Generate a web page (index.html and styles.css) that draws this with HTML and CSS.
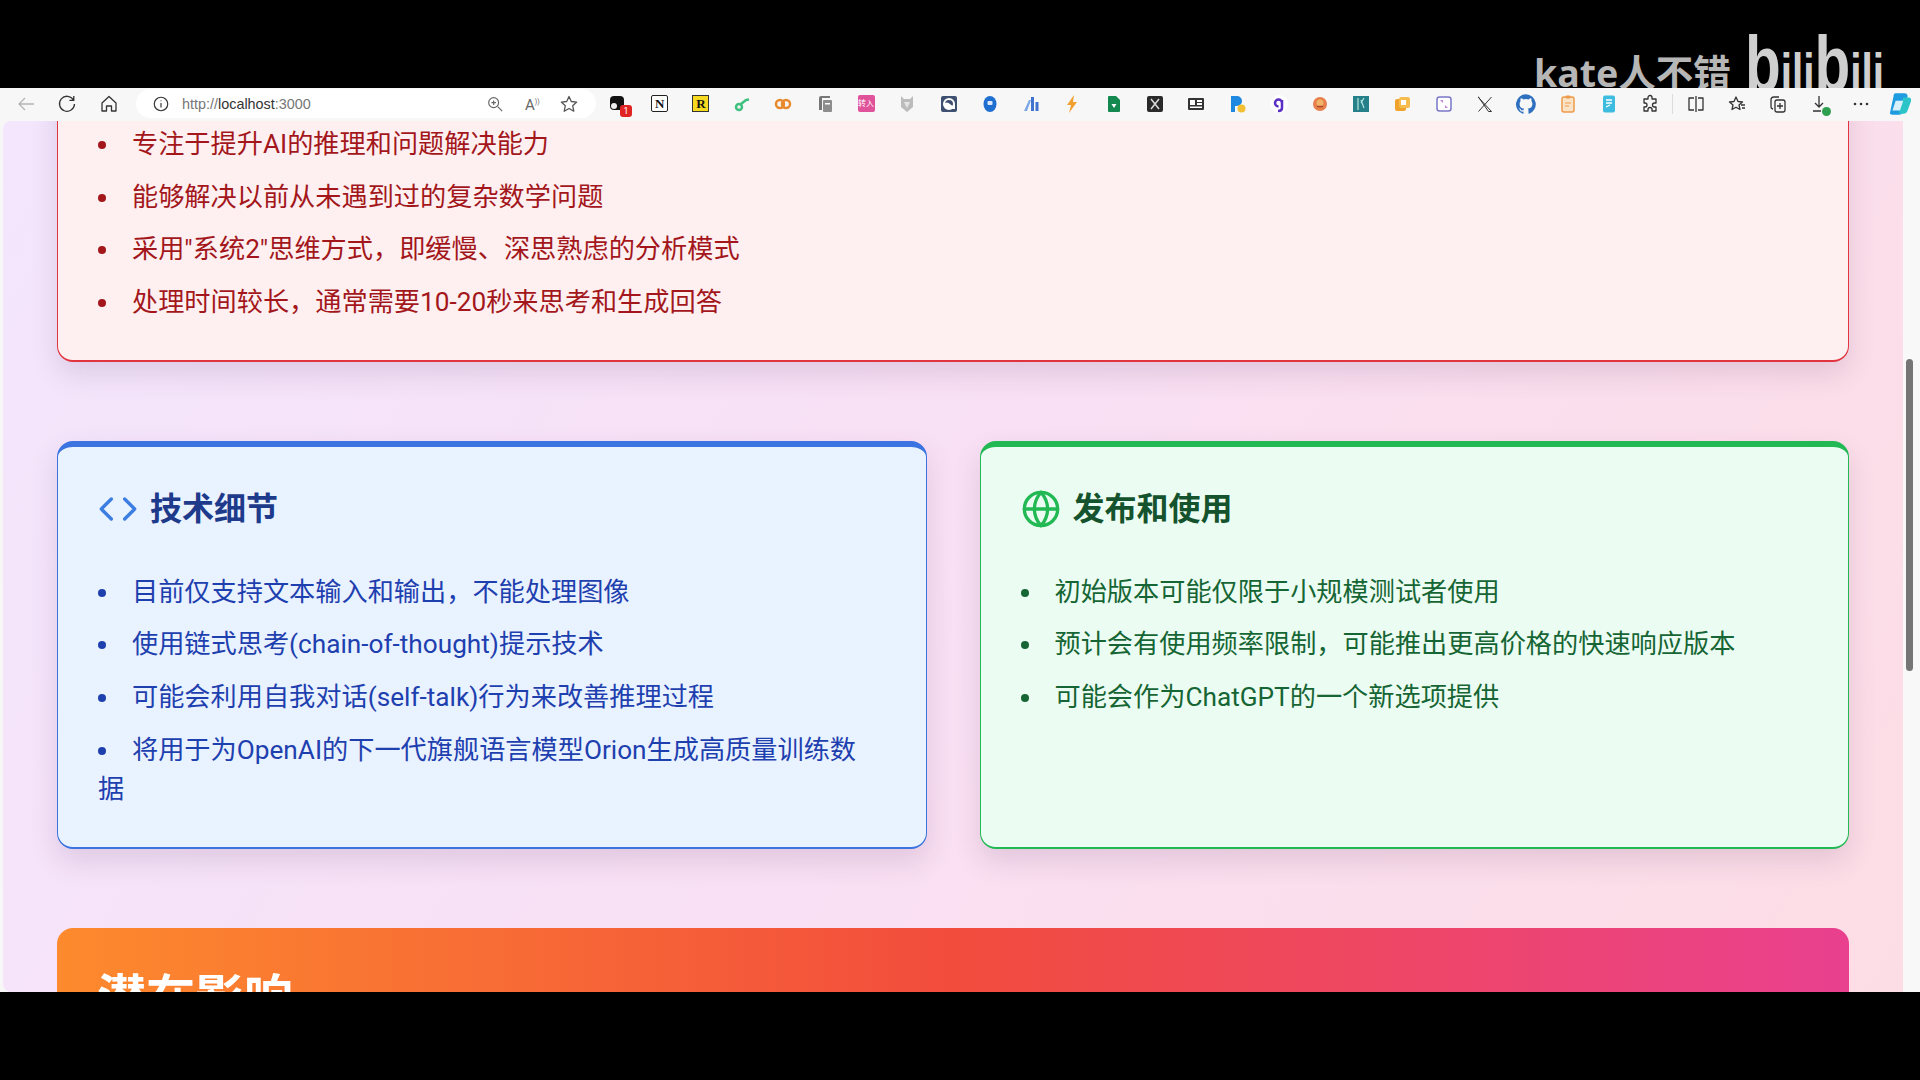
FILE: index.html
```html
<!DOCTYPE html>
<html lang="zh-CN">
  <head>
    <meta charset="UTF-8" />
    <title>localhost:3000</title>
    <link rel="stylesheet" href="styles.css">
  </head>
  <body>
    <!-- Video frame top with watermark -->
    <div class="letterbox">
      <div class="watermark">
        <span class="wm-name">kate人不错</span>
        <span class="wm-logo">b<small>ili</small>b<small>ili</small></span>
      </div>
    </div>

    <!-- Browser toolbar -->
    <div class="toolbar">
      <div class="nav-btn"><svg viewBox="0 0 20 20" class="line faint"><path d="M18 10H3M9 4l-6 6 6 6"/></svg></div>
      <div class="nav-btn"><svg viewBox="0 0 20 20" class="line"><path d="M16.5 6A7.5 7.5 0 1 0 17.5 10M16.8 2v4.4h-4.4"/></svg></div>
      <div class="nav-btn"><svg viewBox="0 0 20 20" class="line"><path d="M3 9l7-6.500L17 9v8h-4.500v-5h-5v5H3z"/></svg></div>

      <div class="address">
        <svg viewBox="0 0 20 20" class="line addr-info"><circle cx="10" cy="10" r="7.500"/><path d="M10 9v5M10 6v1"/></svg>
        <span class="url"><span class="url-dim">http://</span>localhost<span class="url-dim">:3000</span></span>
        <svg viewBox="0 0 20 20" class="line addr-zoom"><circle cx="8.500" cy="8.500" r="5.500"/><path d="M13 13l5 5M8.500 6v5M6 8.500h5"/></svg>
        <span class="addr-read">A<sup>))</sup></span>
        <svg viewBox="0 0 20 20" class="line addr-star"><path d="M10 2.500l2.300 5 5.400.600-4 3.700 1.100 5.400L10 14.500l-4.800 2.700 1.100-5.400-4-3.700 5.400-.600z"/></svg>
      </div>

      <div class="extensions">
        <div class="ext"><svg viewBox="0 0 20 20"><rect x="2" y="2" width="14" height="14" rx="4" fill="#111"/><circle cx="6" cy="12" r="3" fill="#eee"/></svg><span class="badge">1</span></div>
        <div class="ext"><span class="ext-n">N</span></div>
        <div class="ext"><span class="ext-r">R</span></div>
        <div class="ext"><svg viewBox="0 0 20 20" class="line" style="stroke:#3fc07e;stroke-width:2.500"><circle cx="7" cy="13" r="3"/><path d="M9 10l5-4 3-.500"/></svg></div>
        <div class="ext"><svg viewBox="0 0 20 20" class="line" style="stroke:#e8892b;stroke-width:2.500"><circle cx="7" cy="10" r="4"/><circle cx="13" cy="10" r="4"/></svg></div>
        <div class="ext"><svg viewBox="0 0 20 20"><path d="M6 2h9v2H7v12H4V4q0-2 2-2z" fill="#777"/><rect x="8" y="6" width="9" height="12" rx="1" fill="#8d8d8d"/><rect x="10" y="9" width="5" height="1.500" fill="#fff"/></svg></div>
        <div class="ext"><span class="ext-zh">转入</span></div>
        <div class="ext"><svg viewBox="0 0 20 20"><path d="M4 2l3 3h6l3-3v11l-6 5-6-5z" fill="#bcbcbc"/><path d="M7 8h6l-3 6z" fill="#e6e6e6"/></svg></div>
        <div class="ext"><svg viewBox="0 0 20 20"><rect x="2" y="2" width="16" height="16" rx="2" fill="#3d5070"/><circle cx="10" cy="10" r="5" fill="none" stroke="#fff" stroke-width="2"/><path d="M4 10q4-3 7 0t5 0v5H7z" fill="#fff"/></svg></div>
        <div class="ext"><svg viewBox="0 0 20 20"><ellipse cx="10" cy="10" rx="6.500" ry="8" fill="#1f6fd0"/><rect x="7.500" y="7" width="5" height="4" rx="1" fill="#dbe9fb"/></svg></div>
        <div class="ext"><svg viewBox="0 0 20 20"><path d="M3 17L8 6h2L6 17z" fill="#7aa6e8"/><rect x="10" y="3" width="3" height="14" fill="#3f73cf"/><rect x="14.500" y="8" width="3" height="9" fill="#3f73cf"/></svg></div>
        <div class="ext"><svg viewBox="0 0 20 20"><path d="M12 1L5 11h4l-2 8 8-11h-4z" fill="#f0a030"/></svg></div>
        <div class="ext"><svg viewBox="0 0 20 20"><path d="M4 3q0-1 1-1h7l4 4v11q0 1-1 1H5q-1 0-1-1z" fill="#13894f"/><path d="M7.500 10h5L10 14z" fill="#fff"/></svg></div>
        <div class="ext"><svg viewBox="0 0 20 20"><rect x="2" y="2" width="16" height="16" rx="2" fill="#2a2a2a"/><path d="M6 5l8 10M14 5L6 15" stroke="#ddd" stroke-width="1.500"/></svg></div>
        <div class="ext"><svg viewBox="0 0 20 20"><rect x="2" y="4" width="16" height="12" rx="1" fill="#333"/><rect x="4" y="6" width="5" height="5" fill="#fff"/><rect x="11" y="6" width="5" height="2" fill="#fff"/><rect x="11" y="9" width="5" height="2" fill="#fff"/><rect x="4" y="12.500" width="12" height="1.500" fill="#fff"/></svg></div>
        <div class="ext"><svg viewBox="0 0 20 20"><path d="M4 2h6a5 5 0 0 1 0 10H8v6H4z" fill="#1f88e0"/><circle cx="14.500" cy="14.500" r="4" fill="#f3c033"/></svg></div>
        <div class="ext"><svg viewBox="0 0 20 20"><circle cx="10" cy="10" r="9" fill="#fff"/><path d="M13 6v8q0 3-4 3M13 9a3.500 3.500 0 1 0-3.500 3.500" fill="none" stroke="#5b2ec4" stroke-width="2.500"/></svg></div>
        <div class="ext"><svg viewBox="0 0 20 20"><circle cx="10" cy="10" r="7" fill="#e77f4a"/><circle cx="10" cy="9" r="3.500" fill="#f2b36a"/><path d="M7 12.500h6" stroke="#a84a22" stroke-width="1.500"/></svg></div>
        <div class="ext"><svg viewBox="0 0 20 20"><rect x="2" y="2" width="16" height="16" fill="#25808a"/><path d="M7 4v12M10 6l3 8M13 4l-3 5" stroke="#b7e4e0" stroke-width="1.200"/></svg></div>
        <div class="ext"><svg viewBox="0 0 20 20"><rect x="3" y="5" width="11" height="12" rx="2" fill="#f0a32c"/><rect x="7" y="3" width="11" height="11" rx="2" fill="#f6bd4e"/><rect x="9" y="6" width="5" height="5" fill="#fff"/></svg></div>
        <div class="ext"><svg viewBox="0 0 20 20"><rect x="3" y="3" width="14" height="14" rx="2.500" fill="#fff" stroke="#7b78c8" stroke-width="1.500"/><path d="M6 6h3v3zM14 14h-3v-3z" fill="#c084d8"/></svg></div>
        <div class="ext"><svg viewBox="0 0 20 20" class="line thin"><path d="M3 3l13.500 14.500h-3L3.500 3zM16.500 3L3.500 17.500"/></svg></div>
        <div class="ext"><svg viewBox="0 0 16 16"><path fill="#2f6fc0" d="M8 .2a8 8 0 0 0-2.500 15.600c.4.100.5-.2.500-.4v-1.400c-2.200.5-2.700-1-2.700-1-.4-.9-.9-1.200-.9-1.200-.7-.5.100-.5.100-.5.800.100 1.200.8 1.200.8.700 1.200 1.900.9 2.300.7.100-.5.300-.9.500-1.100-1.800-.2-3.600-.9-3.600-4 0-.9.300-1.600.8-2.100-.1-.2-.4-1 .1-2.100 0 0 .7-.2 2.200.8a7.500 7.500 0 0 1 4 0c1.500-1 2.200-.8 2.200-.8.400 1.100.200 1.900.1 2.100.5.600.8 1.300.8 2.100 0 3.100-1.900 3.700-3.700 3.900.3.300.6.800.6 1.500v2.200c0 .2.100.500.600.4A8 8 0 0 0 8 .2z"/></svg></div>
        <div class="ext"><svg viewBox="0 0 20 20"><rect x="4" y="3" width="12" height="15" rx="2" fill="#fbe3c8" stroke="#ee9a4a" stroke-width="1.500"/><rect x="7.500" y="1.500" width="5" height="3" rx="1" fill="#ee9a4a"/><path d="M7 9h6M7 12h4" stroke="#ee9a4a"/></svg></div>
        <div class="ext"><svg viewBox="0 0 20 20"><rect x="4" y="1.500" width="12" height="17" rx="2" fill="#3dbce0"/><path d="M7 6h6M7 9h6M7 13l4-2" stroke="#fff" stroke-width="1.300"/></svg></div>
        <div class="ext"><svg viewBox="0 0 20 20" class="line"><path d="M8 3.500a2 2 0 0 1 4 0V5h4v4h-1.500a2 2 0 0 0 0 4H16v4h-4v-1.500a2 2 0 0 0-4 0V17H4v-4h1a2 2 0 0 0 0-4H4V5h4z"/></svg></div>
        <div class="divider"></div>
        <div class="ext"><svg viewBox="0 0 20 20" class="line"><path d="M8 4H3v12h5M12 4h5v12h-5M10 2v16"/></svg></div>
        <div class="ext"><svg viewBox="0 0 20 20" class="line"><path d="M9 3l2 4.500 4.500.500-3.500 3 1 4.500-4-2.300-4 2.300 1-4.500-3.500-3 4.500-.500zM14 11h4M15 14h3"/></svg></div>
        <div class="ext"><svg viewBox="0 0 20 20" class="line"><rect x="7" y="6" width="10" height="12" rx="2"/><path d="M5 15q-2-.500-2-2V6q0-3 3-3h5M12 9v6M9 12h6"/></svg></div>
        <div class="ext"><svg viewBox="0 0 20 20" class="line"><path d="M9 2v11M5 9l4 4 4-4M3 17h8"/></svg><span class="dl-ok"></span></div>
        <div class="ext"><svg viewBox="0 0 20 20"><circle cx="4" cy="10" r="1.300" fill="#333"/><circle cx="10" cy="10" r="1.300" fill="#333"/><circle cx="16" cy="10" r="1.300" fill="#333"/></svg></div>
        <div class="ext ext-last"><svg viewBox="0 0 24 24" class="copilot"><path d="M8 2h8q3 0 3 3l-4 14q-1 3-4 3H5q-3 0-2-3L6 5q0-3 2-3z" fill="#1f9be0"/><path d="M15 6h5q3 0 2 4l-3 8q-1 3-4 3h-4z" fill="#2bc4c8"/><path d="M8 9h7l-3 9H5z" fill="#d8f0fa"/></svg></div>
      </div>
    </div>

    <!-- Page viewport, scrolled part way down -->
    <div class="viewport">
      <div class="edge"></div>
      <main class="page">
        <section class="card card-red card-scrolled">
          <ul>
            <li>专注于提升AI的推理和问题解决能力</li>
            <li>能够解决以前从未遇到过的复杂数学问题</li>
            <li>采用"系统2"思维方式，即缓慢、深思熟虑的分析模式</li>
            <li>处理时间较长，通常需要10-20秒来思考和生成回答</li>
          </ul>
        </section>

        <div class="two-col">
          <section class="card card-blue">
            <h2>
              <svg viewBox="0 0 24 24" class="title-icon"><polyline points="16 18 22 12 16 6"/><polyline points="8 6 2 12 8 18"/></svg>
              技术细节
            </h2>
            <ul>
              <li>目前仅支持文本输入和输出，不能处理图像</li>
              <li>使用链式思考(chain-of-thought)提示技术</li>
              <li>可能会利用自我对话(self-talk)行为来改善推理过程</li>
              <li>将用于为OpenAI的下一代旗舰语言模型Orion生成高质量训练数据</li>
            </ul>
          </section>

          <section class="card card-green">
            <h2>
              <svg viewBox="0 0 24 24" class="title-icon"><circle cx="12" cy="12" r="10"/><line x1="2" y1="12" x2="22" y2="12"/><path d="M12 2a15.300 15.300 0 0 1 4 10 15.300 15.300 0 0 1-4 10 15.300 15.300 0 0 1-4-10 15.300 15.300 0 0 1 4-10z"/></svg>
              发布和使用
            </h2>
            <ul>
              <li>初始版本可能仅限于小规模测试者使用</li>
              <li>预计会有使用频率限制，可能推出更高价格的快速响应版本</li>
              <li>可能会作为ChatGPT的一个新选项提供</li>
            </ul>
          </section>
        </div>

        <section class="impact">
          <h2>潜在影响</h2>
        </section>
      </main>
      <div class="scrollbar"><div class="thumb"></div></div>
    </div>

    <div class="letterbox-bottom"></div>
  </body>
</html>
```

FILE: styles.css
```css
* {
  box-sizing: border-box;
}
html,
body {
  margin: 0;
  height: 1080px;
  overflow: hidden;
  background: #000;
}
body {
  font-family: Roboto, "Noto Sans CJK SC", sans-serif;
  display: flex;
  flex-direction: column;
}

/* video frame */
.letterbox {
  height: 88px;
  background: #000;
  position: relative;
  overflow: hidden;
}
.letterbox-bottom {
  height: 88px;
  background: #000;
}
.watermark {
  position: absolute;
  left: 1534px;
  top: 0;
  width: 380px;
  height: 88px;
  color: #b6b6b6;
}
.wm-name {
  position: absolute;
  left: 0;
  top: 47px;
  font-family: "Noto Sans", "Noto Sans CJK SC", sans-serif;
  font-size: 37.500px;
  line-height: 52px;
  font-weight: 700;
  white-space: nowrap;
}
.wm-logo {
  position: absolute;
  left: 211px;
  top: 22px;
  font-family: "Liberation Sans", sans-serif;
  font-size: 78px;
  line-height: 84px;
  font-weight: 700;
  color: #cfcfcf;
  white-space: nowrap;
  transform: scaleX(0.75);
  transform-origin: left center;
}
.wm-logo small {
  font-size: 54px;
}

/* browser toolbar */
.toolbar {
  height: 33px;
  background: #f7f7f7;
  display: flex;
  align-items: center;
  padding: 0 0 2px 5px;
}
.toolbar svg {
  width: 20px;
  height: 20px;
  display: block;
}
.toolbar svg.copilot {
  width: 26px;
  height: 26px;
}
.line {
  fill: none;
  stroke: #333;
  stroke-width: 1.300;
  stroke-linejoin: round;
}
.line.faint {
  stroke: #b5b5b5;
}
.line.thin {
  stroke-width: 1;
}
.nav-btn {
  width: 41.500px;
  flex: none;
  display: flex;
  justify-content: center;
}
.address {
  width: 459.500px;
  flex: none;
  height: 29px;
  margin-left: 6.500px;
  background: #fff;
  border-radius: 15px;
  display: flex;
  align-items: center;
  padding-left: 16px;
  color: #333;
  font-size: 13px;
}
.address .addr-info {
  width: 18px;
  height: 18px;
}
.url {
  margin-left: 12px;
  width: 304px;
  font-family: "Liberation Sans", sans-serif;
  font-size: 14.400px;
}
.url-dim {
  color: #777;
}
.address .addr-zoom {
  width: 18px;
  height: 18px;
  stroke: #666;
}
.addr-read {
  margin-left: 21px;
  width: 20px;
  color: #666;
  font-size: 15px;
  line-height: 20px;
}
.addr-read sup {
  font-size: 7px;
}
.address .addr-star {
  margin-left: 14px;
  stroke: #555;
}
.extensions {
  display: flex;
  flex: none;
  align-items: center;
  margin-left: 2.300px;
}
.ext {
  width: 41.280px;
  flex: none;
  height: 31px;
  display: flex;
  justify-content: center;
  align-items: center;
  position: relative;
}
.ext-last {
  width: 38px;
}
.badge {
  position: absolute;
  right: 7px;
  bottom: 2px;
  width: 12px;
  height: 12px;
  border-radius: 3px;
  background: #e02424;
  color: #fff;
  font-size: 9px;
  line-height: 12px;
  text-align: center;
}
.ext-n,
.ext-r {
  width: 17px;
  height: 17px;
  font-family: "Liberation Serif", serif;
  font-weight: 700;
  font-size: 13px;
  line-height: 15px;
  text-align: center;
}
.ext-n {
  border: 1.500px solid #222;
  border-radius: 2px;
  background: #fff;
  color: #111;
}
.ext-r {
  border: 1px solid #333;
  background: #f6d920;
  color: #111;
}
.ext-zh {
  width: 17px;
  height: 17px;
  border-radius: 2px;
  background: #e0539a;
  color: #fff;
  font-size: 8px;
  line-height: 17px;
  text-align: center;
  white-space: nowrap;
}
.divider {
  width: 1px;
  flex: none;
  height: 20px;
  background: #dcdcdc;
  margin: 0 2.400px 0 1px;
}
.dl-ok {
  position: absolute;
  right: 9px;
  bottom: 3px;
  width: 9px;
  height: 9px;
  border-radius: 50%;
  background: #2e9e4f;
}

/* page */
.viewport {
  height: 871px;
  display: flex;
  overflow: hidden;
  background: #f7f7f7;
}
.edge {
  width: 3px;
}
.page {
  flex: 1;
  overflow: hidden;
  border-radius: 8px 0 0 8px;
  padding: 0 54px;
  background: linear-gradient(120deg, #f3e6fd 0%, #f9e0f4 50%, #fddde5 100%);
}
.scrollbar {
  width: 17px;
  padding: 238px 7px 0 3px;
  background: #f8f8f8;
}
.thumb {
  height: 312px;
  border-radius: 4px;
  background: #757575;
}

.card {
  border: 1px solid;
  border-radius: 16px;
  padding: 40px;
  box-shadow: 0 12px 28px rgba(80, 40, 90, 0.14);
}
.card-scrolled {
  margin-top: -37px;
  padding-bottom: 38px;
  border-bottom-width: 2px;
}
.two-col {
  display: grid;
  grid-template-columns: 1fr 1fr;
  gap: 53px;
  margin-top: 79px;
}
.card-blue,
.card-green {
  padding-top: 39px;
  padding-bottom: 38px;
  border-top-width: 6px;
  border-bottom-width: 2px;
}
.card-red {
  background: #fef0f0;
  border-color: #e0353f;
  color: #a3171c;
}
.card-blue {
  background: #e9f2ff;
  border-color: #3b74e0;
  color: #1e40af;
}
.card-blue ul {
  padding-right: 8px;
}
.card-green {
  background: #ebfdf2;
  border-color: #22b955;
  color: #166534;
}
.card h2 {
  display: flex;
  align-items: center;
  gap: 12px;
  margin: 0 0 41px;
  font-size: 32px;
  line-height: 46px;
  font-weight: 700;
}
.card-blue h2 {
  color: #1e3a8a;
}
.card-green h2 {
  color: #14532d;
}
.title-icon {
  width: 40px;
  height: 40px;
  fill: none;
  stroke-width: 2;
  stroke-linecap: round;
  stroke-linejoin: round;
}
.card-blue .title-icon {
  stroke: #3b7de0;
}
.card-green .title-icon {
  stroke: #22b955;
}
ul {
  list-style: none;
  margin: 0;
  padding: 0;
}
li {
  font-size: 26.200px;
  line-height: 39px;
  margin-bottom: 13.600px;
}
li:last-child {
  margin-bottom: 0;
}
li::before {
  content: "";
  display: inline-block;
  width: 8px;
  height: 8px;
  margin-right: 26px;
  border-radius: 50%;
  background: currentColor;
  vertical-align: 4px;
}
.impact {
  margin-top: 79px;
  height: 200px;
  padding: 41px 40px;
  border-radius: 16px;
  color: #fff;
  background: linear-gradient(90deg, #fd8a2d 0%, #f24c3d 50%, #e9408f 100%);
}
.impact h2 {
  margin: 0;
  font-size: 49px;
  line-height: 60px;
  font-weight: 700;
  color: #fff;
}
```
